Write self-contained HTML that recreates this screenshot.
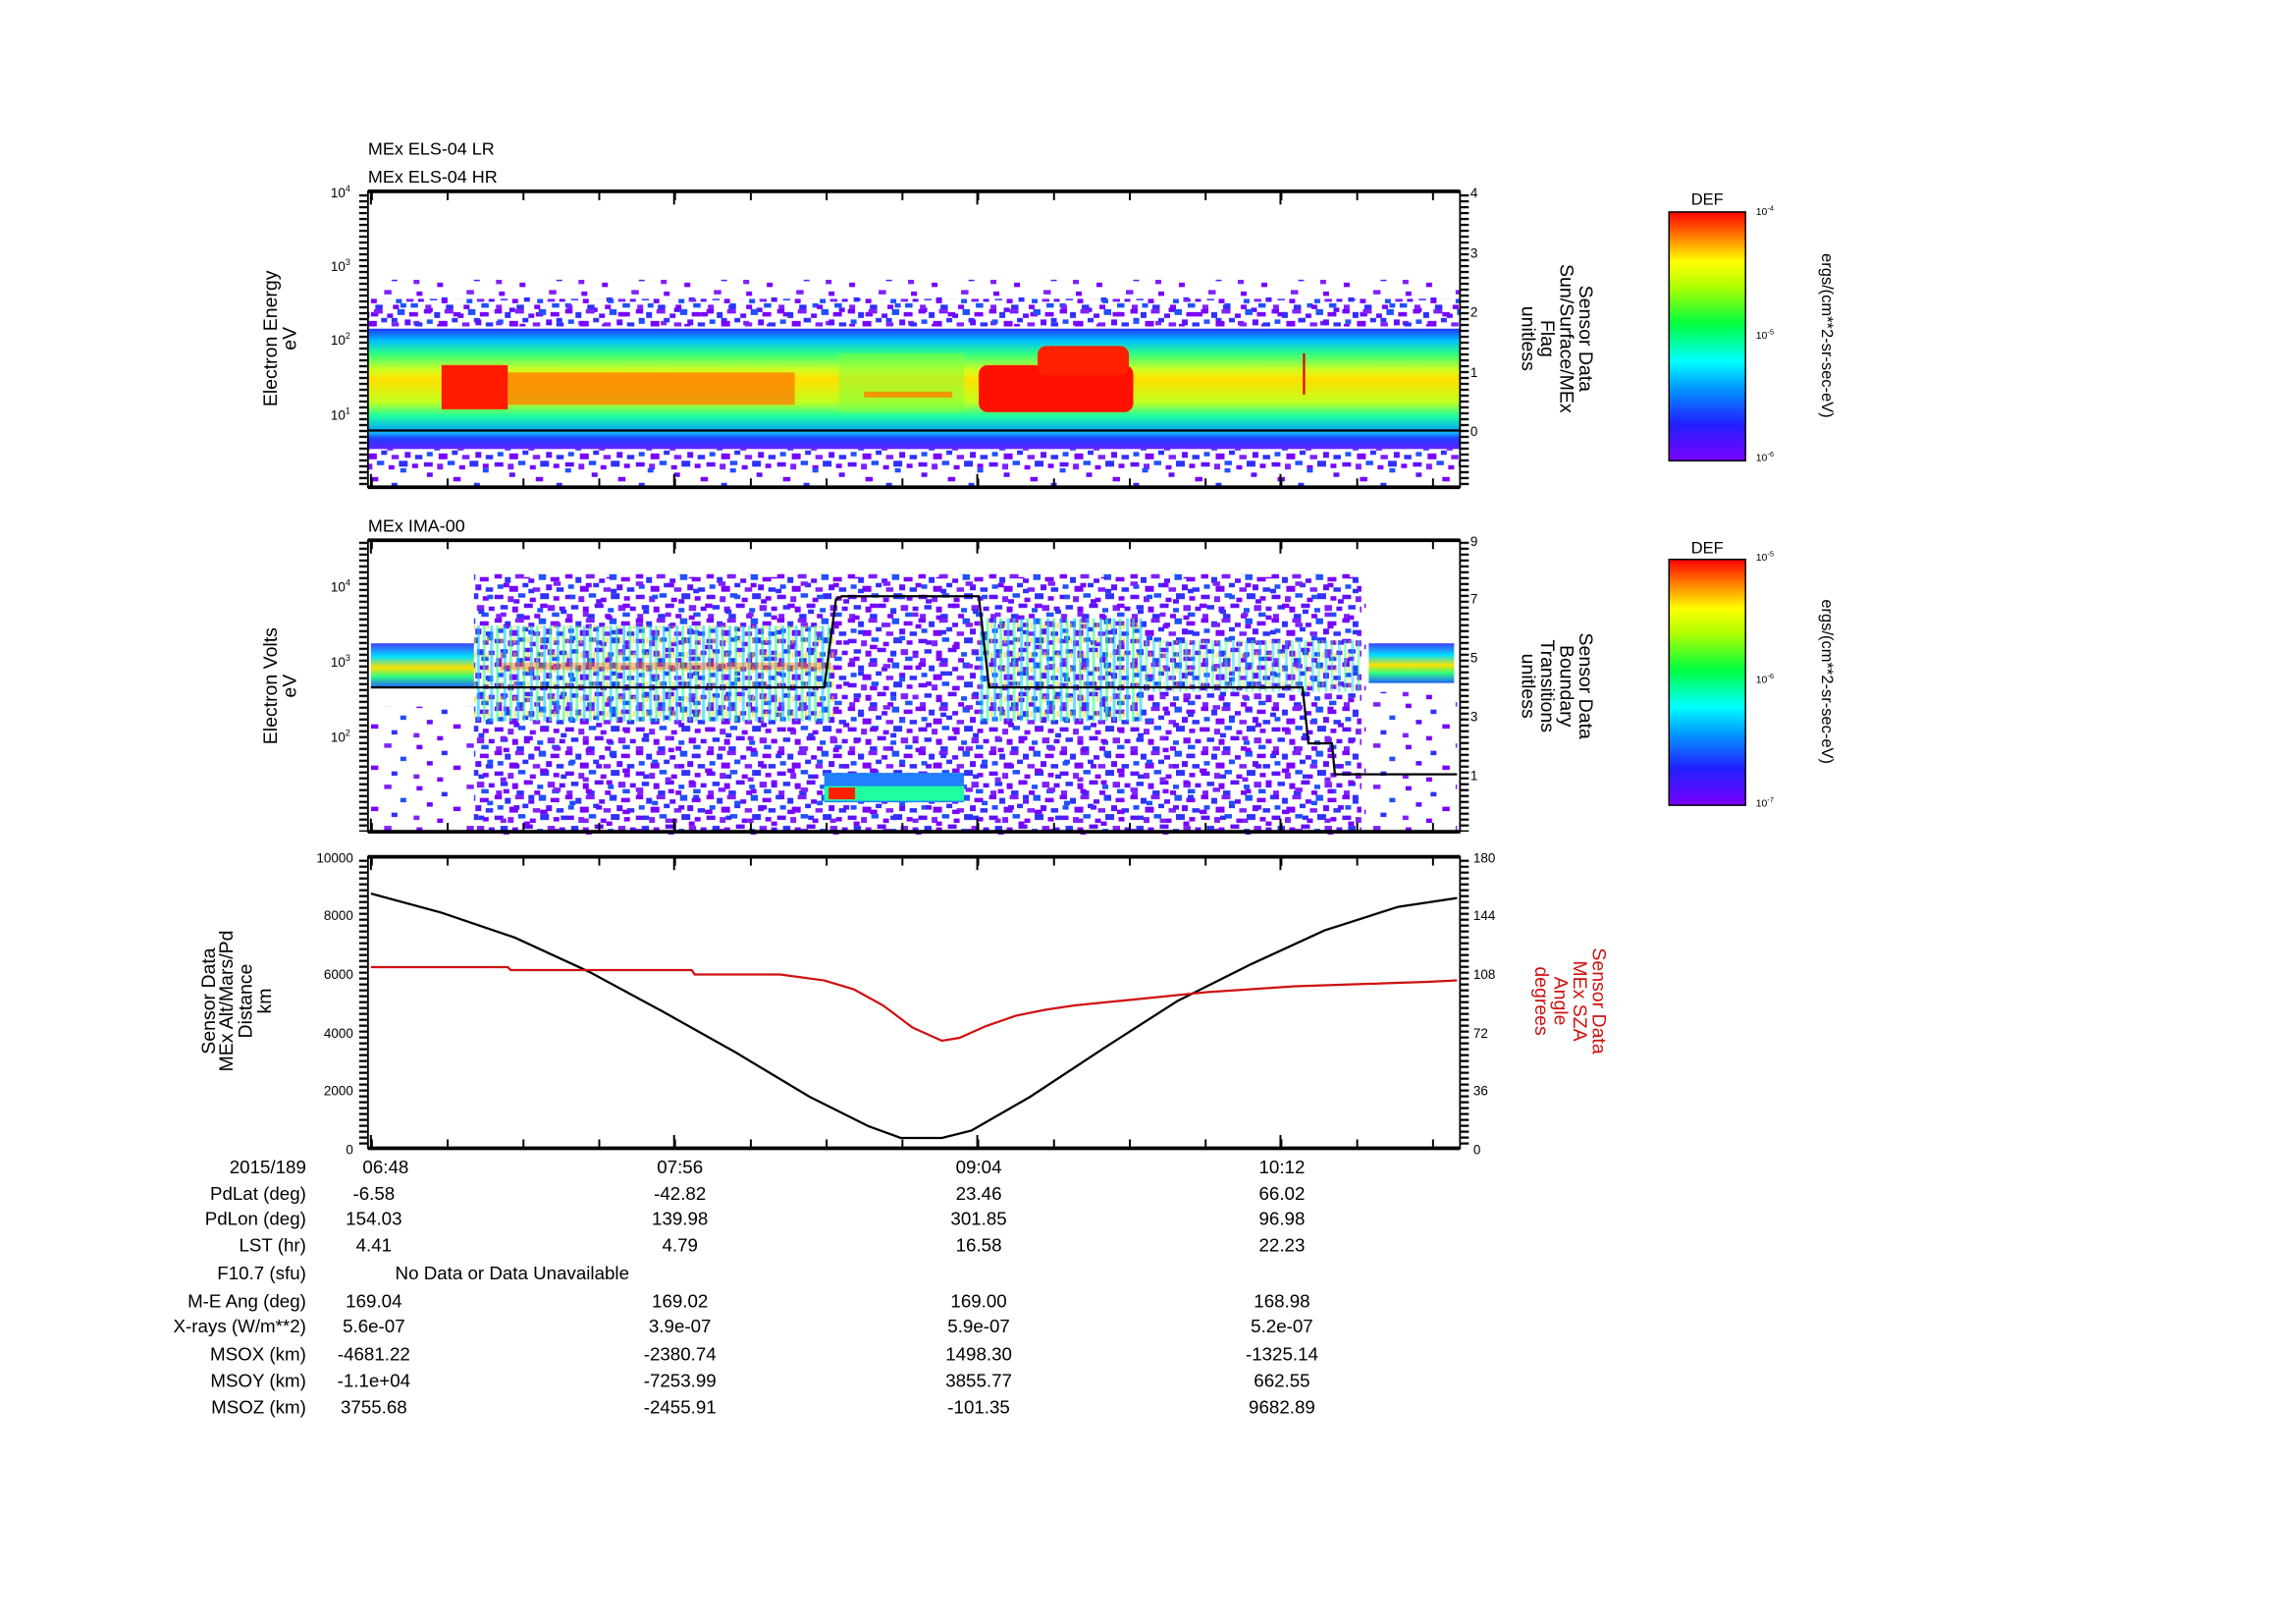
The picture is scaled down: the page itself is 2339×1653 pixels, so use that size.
<!DOCTYPE html>
<html><head><meta charset="utf-8"><style>
html,body{margin:0;padding:0;background:#fff;}
svg{display:block;}
text{font-family:"Liberation Sans",sans-serif;}
</style></head><body>
<svg width="2339" height="1653" viewBox="0 0 1560 1102.5" xmlns="http://www.w3.org/2000/svg">
<defs>
<linearGradient id="cb" x1="0" y1="1" x2="0" y2="0">
<stop offset="0" stop-color="#7a00ff"/><stop offset="0.15" stop-color="#2020ff"/><stop offset="0.3" stop-color="#00a0ff"/><stop offset="0.4" stop-color="#00ffff"/><stop offset="0.55" stop-color="#00ff40"/><stop offset="0.7" stop-color="#b0ff00"/><stop offset="0.8" stop-color="#ffff00"/><stop offset="0.9" stop-color="#ff8000"/><stop offset="1" stop-color="#ff0000"/>
</linearGradient>
<linearGradient id="p1" x1="0" y1="0" x2="0" y2="1">
<stop offset="0" stop-color="#2030ff"/><stop offset="0.12" stop-color="#00c0ff"/><stop offset="0.25" stop-color="#30ff80"/><stop offset="0.4" stop-color="#d0ff20"/><stop offset="0.5" stop-color="#ffe000"/><stop offset="0.72" stop-color="#c0ff20"/><stop offset="0.85" stop-color="#20ffa0"/><stop offset="1" stop-color="#00a0ff"/>
</linearGradient>
<linearGradient id="p1b" x1="0" y1="0" x2="0" y2="1">
<stop offset="0" stop-color="#10d0ff"/><stop offset="0.4" stop-color="#2040ff"/><stop offset="1" stop-color="#6020ff"/>
</linearGradient>
<linearGradient id="band2" x1="0" y1="0" x2="0" y2="1">
<stop offset="0" stop-color="#4040ff"/><stop offset="0.3" stop-color="#00e0ff"/><stop offset="0.55" stop-color="#ffe000"/><stop offset="0.75" stop-color="#30ff80"/><stop offset="1" stop-color="#2060ff"/>
</linearGradient>
<pattern id="sp" width="48" height="30" patternUnits="userSpaceOnUse">
<rect x="0" y="0" width="5" height="3" fill="#7a00ff"/><rect x="7" y="2" width="4" height="4" fill="#3030ff"/><rect x="14" y="0" width="6" height="3" fill="#8020ff"/><rect x="23" y="3" width="4" height="3" fill="#6010ff"/><rect x="30" y="0" width="5" height="4" fill="#2050ff"/><rect x="38" y="2" width="6" height="3" fill="#7a00ff"/>
<rect x="2" y="7" width="4" height="3" fill="#2050ff"/><rect x="10" y="8" width="6" height="4" fill="#7a00ff"/><rect x="19" y="6" width="4" height="3" fill="#3030ff"/><rect x="26" y="9" width="5" height="3" fill="#8020ff"/><rect x="35" y="7" width="4" height="4" fill="#6010ff"/><rect x="42" y="9" width="5" height="3" fill="#3030ff"/>
<rect x="0" y="14" width="6" height="3" fill="#6010ff"/><rect x="9" y="15" width="4" height="4" fill="#8020ff"/><rect x="16" y="13" width="5" height="3" fill="#2050ff"/><rect x="24" y="16" width="4" height="3" fill="#7a00ff"/><rect x="31" y="13" width="6" height="4" fill="#3030ff"/><rect x="40" y="15" width="4" height="3" fill="#7a00ff"/>
<rect x="4" y="21" width="5" height="3" fill="#3030ff"/><rect x="12" y="22" width="4" height="4" fill="#7a00ff"/><rect x="20" y="20" width="6" height="3" fill="#6010ff"/><rect x="29" y="23" width="4" height="3" fill="#2050ff"/><rect x="36" y="21" width="5" height="4" fill="#8020ff"/><rect x="44" y="22" width="4" height="3" fill="#6010ff"/>
<rect x="1" y="27" width="4" height="3" fill="#8020ff"/><rect x="15" y="27" width="5" height="3" fill="#3030ff"/><rect x="27" y="27" width="4" height="3" fill="#7a00ff"/><rect x="39" y="26" width="5" height="3" fill="#2050ff"/>
</pattern>
<pattern id="sps" width="56" height="28" patternUnits="userSpaceOnUse">
<rect x="3" y="2" width="4" height="3" fill="#7a00ff"/><rect x="20" y="6" width="4" height="3" fill="#3030ff"/><rect x="37" y="1" width="5" height="3" fill="#8020ff"/><rect x="48" y="10" width="4" height="3" fill="#2050ff"/>
<rect x="10" y="13" width="4" height="3" fill="#6010ff"/><rect x="28" y="16" width="5" height="3" fill="#7a00ff"/><rect x="42" y="20" width="4" height="3" fill="#3030ff"/><rect x="1" y="22" width="4" height="3" fill="#8020ff"/><rect x="17" y="24" width="4" height="3" fill="#7a00ff"/>
</pattern>
<pattern id="str" width="9" height="10" patternUnits="userSpaceOnUse">
<rect x="0" y="0" width="2" height="10" fill="#00d0ff"/><rect x="4" y="0" width="2" height="10" fill="#30ff80"/><rect x="7" y="3" width="1.5" height="4" fill="#ffd000"/>
</pattern>
<pattern id="tl" width="6" height="4" patternUnits="userSpaceOnUse"><rect x="0" y="0" width="6" height="1.5" fill="#000"/></pattern>
<pattern id="tt" x="252" y="0" width="51.5" height="10" patternUnits="userSpaceOnUse"><rect x="0" y="0" width="1.3" height="10" fill="#000"/></pattern>
</defs>

<!-- panel 1 data -->
<rect x="250" y="190" width="742" height="33" fill="url(#sps)"/>
<rect x="250" y="203" width="742" height="20" fill="url(#sp)"/>
<rect x="250" y="223" width="742" height="70" fill="url(#p1)"/>
<rect x="250" y="293" width="742" height="12" fill="url(#p1b)"/>
<rect x="250" y="305" width="742" height="14" fill="url(#sp)"/>
<rect x="250" y="318" width="742" height="12" fill="url(#sps)"/>
<rect x="300" y="248" width="45" height="30" fill="#ff1a00"/>
<rect x="345" y="253" width="195" height="22" fill="#ff7000" opacity="0.7"/>
<rect x="665" y="248" width="105" height="32" fill="#ff1000" rx="6"/>
<rect x="705" y="235" width="62" height="20" fill="#ff2000" rx="6"/>
<rect x="570" y="240" width="85" height="40" fill="#80ff40" opacity="0.5"/>
<rect x="587" y="266" width="60" height="4" fill="#ff8000" opacity="0.8"/>
<line x1="886" y1="240" x2="886" y2="268" stroke="#e00000" stroke-width="1.5"/>
<line x1="250" y1="222.5" x2="992" y2="222.5" stroke="#fff" stroke-width="1.5"/>
<line x1="250" y1="292.5" x2="992" y2="292.5" stroke="#000" stroke-width="1.5"/>

<!-- panel 2 data -->
<rect x="252" y="437" width="70" height="30" fill="url(#band2)"/>
<rect x="930" y="437" width="58" height="27" fill="url(#band2)"/>
<rect x="322" y="390" width="603" height="175" fill="url(#sp)"/>
<rect x="322" y="390" width="603" height="175" fill="url(#sps)" transform="translate(3,2)"/>
<rect x="322" y="425" width="245" height="65" fill="url(#str)" opacity="0.6"/>
<rect x="665" y="420" width="112" height="70" fill="url(#str)" opacity="0.6"/>
<rect x="777" y="435" width="148" height="35" fill="url(#str)" opacity="0.45"/>
<rect x="340" y="450" width="225" height="5" fill="#ff6000" opacity="0.4"/>
<rect x="560" y="525" width="95" height="20" fill="#2080ff"/>
<rect x="560" y="534" width="95" height="10" fill="#20ffa0"/>
<rect x="563" y="535" width="18" height="8" fill="#ff2000"/>
<rect x="252" y="480" width="70" height="85" fill="url(#sps)"/>
<rect x="930" y="470" width="60" height="95" fill="url(#sps)"/>

<g fill="none" stroke="#000">
<polyline points="252,467 560,467 568,407 572,405 665,405 672,467 885,467 889,505 905,505 907,526 990,526" stroke-width="1.5"/>
<polyline points="252,607 300,620 350,637 400,660 450,687 500,715 550,745 590,765 612,773 640,773 660,768 700,745 750,712 800,680 850,655 900,632 950,616 990,610" stroke-width="1.5"/>
<polyline points="252,657 345,657 347,659 470,659 472,662 530,662 560,666 580,672 600,683 620,698 640,707 652,705 670,697 690,690 710,686 730,683 760,680 790,677 820,674 850,672 880,670 910,669 940,668 970,667 990,666" stroke="#d01010" stroke-width="1.5"/>
</g>

<!-- axes -->
<g fill="none" stroke="#000">
<rect x="250" y="130" width="742" height="201" stroke-width="1.2"/>
<rect x="250" y="367" width="742" height="198" stroke-width="1.2"/>
<rect x="250" y="582" width="742" height="198" stroke-width="1.2"/>
<g stroke-width="2.5">
<line x1="250" y1="130" x2="992" y2="130"/><line x1="250" y1="331" x2="992" y2="331"/>
<line x1="250" y1="367" x2="992" y2="367"/><line x1="250" y1="565" x2="992" y2="565"/>
<line x1="250" y1="582" x2="992" y2="582"/><line x1="250" y1="780" x2="992" y2="780"/>
</g>
<g stroke-width="1.3">
<path d="M252,130v9M458,130v9M664,130v9M870,130v9M252,331v-9M458,331v-9M664,331v-9M870,331v-9
M252,367v9M458,367v9M664,367v9M870,367v9M252,565v-9M458,565v-9M664,565v-9M870,565v-9
M252,582v9M458,582v9M664,582v9M870,582v9M252,780v-9M458,780v-9M664,780v-9M870,780v-9"/>
</g>
</g>
<rect x="250" y="131" width="742" height="5" fill="url(#tt)"/>
<rect x="250" y="325" width="742" height="5" fill="url(#tt)"/>
<rect x="250" y="368" width="742" height="5" fill="url(#tt)"/>
<rect x="250" y="559" width="742" height="5" fill="url(#tt)"/>
<rect x="250" y="583" width="742" height="5" fill="url(#tt)"/>
<rect x="250" y="774" width="742" height="5" fill="url(#tt)"/>
<rect x="244" y="130" width="6" height="201" fill="url(#tl)"/>
<rect x="992" y="130" width="6" height="201" fill="url(#tl)"/>
<rect x="244" y="367" width="6" height="198" fill="url(#tl)"/>
<rect x="992" y="367" width="6" height="198" fill="url(#tl)"/>
<rect x="244" y="582" width="6" height="198" fill="url(#tl)"/>
<rect x="992" y="582" width="6" height="198" fill="url(#tl)"/>

<g font-size="12" fill="#000">
<text x="250" y="105">MEx ELS-04 LR</text>
<text x="250" y="124">MEx ELS-04 HR</text>
<text x="250" y="361">MEx IMA-00</text>
</g>
<g font-size="9" fill="#000" text-anchor="end">
<text x="238" y="134">10<tspan dy="-4" font-size="6">4</tspan></text>
<text x="238" y="184">10<tspan dy="-4" font-size="6">3</tspan></text>
<text x="238" y="234">10<tspan dy="-4" font-size="6">2</tspan></text>
<text x="238" y="285">10<tspan dy="-4" font-size="6">1</tspan></text>
<text x="238" y="402">10<tspan dy="-4" font-size="6">4</tspan></text>
<text x="238" y="453">10<tspan dy="-4" font-size="6">3</tspan></text>
<text x="238" y="504">10<tspan dy="-4" font-size="6">2</tspan></text>
<text x="240" y="586">10000</text><text x="240" y="625">8000</text><text x="240" y="665">6000</text><text x="240" y="705">4000</text><text x="240" y="744">2000</text><text x="240" y="784">0</text>
</g>
<g font-size="9" fill="#000">
<text x="999" y="134">4</text><text x="999" y="175">3</text><text x="999" y="215">2</text><text x="999" y="256">1</text><text x="999" y="296">0</text>
<text x="999" y="371">9</text><text x="999" y="410">7</text><text x="999" y="450">5</text><text x="999" y="490">3</text><text x="999" y="530">1</text>
<text x="1001" y="586">180</text><text x="1001" y="625">144</text><text x="1001" y="665">108</text><text x="1001" y="705">72</text><text x="1001" y="744">36</text><text x="1001" y="784">0</text>
</g>
<g font-size="13" fill="#000" text-anchor="middle">
<text transform="translate(188,230) rotate(-90)">Electron Energy</text>
<text transform="translate(201,230) rotate(-90)">eV</text>
<text transform="translate(188,466) rotate(-90)">Electron Volts</text>
<text transform="translate(201,466) rotate(-90)">eV</text>
<text transform="translate(146,680) rotate(-90)">Sensor Data</text>
<text transform="translate(158,680) rotate(-90)">MEx Alt/Mars/Pd</text>
<text transform="translate(171,680) rotate(-90)">Distance</text>
<text transform="translate(184,680) rotate(-90)">km</text>
<text transform="translate(1073,230) rotate(90)">Sensor Data</text>
<text transform="translate(1060,230) rotate(90)">Sun/Surface/MEx</text>
<text transform="translate(1047,230) rotate(90)">Flag</text>
<text transform="translate(1034,230) rotate(90)">unitless</text>
<text transform="translate(1073,466) rotate(90)">Sensor Data</text>
<text transform="translate(1060,466) rotate(90)">Boundary</text>
<text transform="translate(1047,466) rotate(90)">Transitions</text>
<text transform="translate(1034,466) rotate(90)">unitless</text>
<g fill="#d01010">
<text transform="translate(1082,680) rotate(90)">Sensor Data</text>
<text transform="translate(1069,680) rotate(90)">MEx SZA</text>
<text transform="translate(1056,680) rotate(90)">Angle</text>
<text transform="translate(1043,680) rotate(90)">degrees</text>
</g>
<text font-size="11" transform="translate(1238,228) rotate(90)">ergs/(cm**2-sr-sec-eV)</text>
<text font-size="11" transform="translate(1238,463) rotate(90)">ergs/(cm**2-sr-sec-eV)</text>
<text font-size="11" x="1160" y="139">DEF</text>
<text font-size="11" x="1160" y="376">DEF</text>
</g>
<rect x="1134" y="144" width="52" height="169" fill="url(#cb)" stroke="#000"/>
<rect x="1134" y="380" width="52" height="167" fill="url(#cb)" stroke="#000"/>
<g font-size="7" fill="#000">
<text x="1193" y="146">10<tspan dy="-3" font-size="5">-4</tspan></text>
<text x="1193" y="230">10<tspan dy="-3" font-size="5">-5</tspan></text>
<text x="1193" y="313">10<tspan dy="-3" font-size="5">-6</tspan></text>
<text x="1193" y="381">10<tspan dy="-3" font-size="5">-5</tspan></text>
<text x="1193" y="464">10<tspan dy="-3" font-size="5">-6</tspan></text>
<text x="1193" y="548">10<tspan dy="-3" font-size="5">-7</tspan></text>
</g>
<g font-size="12.5" fill="#000">
<g text-anchor="end">
<text x="208" y="797">2015/189</text><text x="208" y="815">PdLat (deg)</text><text x="208" y="832">PdLon (deg)</text><text x="208" y="850">LST (hr)</text><text x="208" y="869">F10.7 (sfu)</text><text x="208" y="888">M-E Ang (deg)</text><text x="208" y="905">X-rays (W/m**2)</text><text x="208" y="924">MSOX (km)</text><text x="208" y="942">MSOY (km)</text><text x="208" y="960">MSOZ (km)</text>
</g>
<g text-anchor="middle">
<text x="262" y="797">06:48</text><text x="462" y="797">07:56</text><text x="665" y="797">09:04</text><text x="871" y="797">10:12</text>
<text x="254" y="815">-6.58</text><text x="462" y="815">-42.82</text><text x="665" y="815">23.46</text><text x="871" y="815">66.02</text>
<text x="254" y="832">154.03</text><text x="462" y="832">139.98</text><text x="665" y="832">301.85</text><text x="871" y="832">96.98</text>
<text x="254" y="850">4.41</text><text x="462" y="850">4.79</text><text x="665" y="850">16.58</text><text x="871" y="850">22.23</text>
<text x="348" y="869">No Data or Data Unavailable</text>
<text x="254" y="888">169.04</text><text x="462" y="888">169.02</text><text x="665" y="888">169.00</text><text x="871" y="888">168.98</text>
<text x="254" y="905">5.6e-07</text><text x="462" y="905">3.9e-07</text><text x="665" y="905">5.9e-07</text><text x="871" y="905">5.2e-07</text>
<text x="254" y="924">-4681.22</text><text x="462" y="924">-2380.74</text><text x="665" y="924">1498.30</text><text x="871" y="924">-1325.14</text>
<text x="254" y="942">-1.1e+04</text><text x="462" y="942">-7253.99</text><text x="665" y="942">3855.77</text><text x="871" y="942">662.55</text>
<text x="254" y="960">3755.68</text><text x="462" y="960">-2455.91</text><text x="665" y="960">-101.35</text><text x="871" y="960">9682.89</text>
</g></g>
</svg>
</body></html>
